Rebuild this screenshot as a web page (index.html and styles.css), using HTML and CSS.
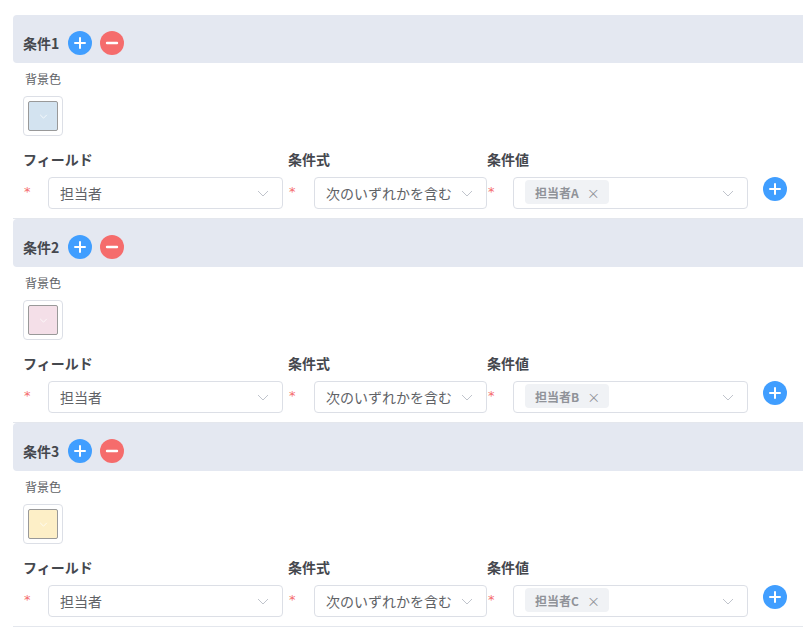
FILE: index.html
```html
<!DOCTYPE html>
<html lang="ja">
<head>
<meta charset="utf-8">
<title>条件</title>
<link rel="stylesheet" href="styles.css">
</head>
<body>
<div class="page">

  <section class="cond">
    <div class="cond-head">
      <span class="cond-title">条件1</span>
      <button class="circle add" aria-label="追加"><svg viewBox="0 0 24 24" width="24" height="24"><path d="M12 7v10M7 12h10" stroke="#fff" stroke-width="2" stroke-linecap="round"/></svg></button>
      <button class="circle del" aria-label="削除"><svg viewBox="0 0 24 24" width="24" height="24"><path d="M7 12h10" stroke="#fff" stroke-width="2.4" stroke-linecap="round"/></svg></button>
    </div>
    <div class="bg-label">背景色</div>
    <div class="picker"><div class="swatch sw-blue"><svg class="chev-w" viewBox="0 0 10 6" width="9" height="5"><path d="M1 1l4 4 4-4" fill="none" stroke="#fff" stroke-width="0.9"/></svg></div></div>
    <div class="fields">
      <div class="col col-field">
        <div class="lbl">フィールド</div>
        <div class="ctrl"><span class="req">*</span><div class="select w235"><span class="val">担当者</span><svg class="chev" viewBox="0 0 12 7" width="12" height="7"><path d="M1 1l5 5 5-5" fill="none" stroke="#c0c4cc" stroke-width="1"/></svg></div></div>
      </div>
      <div class="col col-op">
        <div class="lbl">条件式</div>
        <div class="ctrl"><span class="req">*</span><div class="select w173"><span class="val">次のいずれかを含む</span><svg class="chev" viewBox="0 0 12 7" width="12" height="7"><path d="M1 1l5 5 5-5" fill="none" stroke="#c0c4cc" stroke-width="1"/></svg></div></div>
      </div>
      <div class="col col-val">
        <div class="lbl">条件値</div>
        <div class="ctrl"><span class="req">*</span><div class="select w235"><span class="tag">担当者A<span class="x">×</span></span><svg class="chev" viewBox="0 0 12 7" width="12" height="7"><path d="M1 1l5 5 5-5" fill="none" stroke="#c0c4cc" stroke-width="1"/></svg></div></div>
      </div>
      <button class="circle add row-add" aria-label="追加"><svg viewBox="0 0 24 24" width="24" height="24"><path d="M12 7v10M7 12h10" stroke="#fff" stroke-width="2" stroke-linecap="round"/></svg></button>
    </div>
  </section>

  <section class="cond">
    <div class="cond-head">
      <span class="cond-title">条件2</span>
      <button class="circle add" aria-label="追加"><svg viewBox="0 0 24 24" width="24" height="24"><path d="M12 7v10M7 12h10" stroke="#fff" stroke-width="2" stroke-linecap="round"/></svg></button>
      <button class="circle del" aria-label="削除"><svg viewBox="0 0 24 24" width="24" height="24"><path d="M7 12h10" stroke="#fff" stroke-width="2.4" stroke-linecap="round"/></svg></button>
    </div>
    <div class="bg-label">背景色</div>
    <div class="picker"><div class="swatch sw-pink"><svg class="chev-w" viewBox="0 0 10 6" width="9" height="5"><path d="M1 1l4 4 4-4" fill="none" stroke="#fff" stroke-width="0.9"/></svg></div></div>
    <div class="fields">
      <div class="col col-field">
        <div class="lbl">フィールド</div>
        <div class="ctrl"><span class="req">*</span><div class="select w235"><span class="val">担当者</span><svg class="chev" viewBox="0 0 12 7" width="12" height="7"><path d="M1 1l5 5 5-5" fill="none" stroke="#c0c4cc" stroke-width="1"/></svg></div></div>
      </div>
      <div class="col col-op">
        <div class="lbl">条件式</div>
        <div class="ctrl"><span class="req">*</span><div class="select w173"><span class="val">次のいずれかを含む</span><svg class="chev" viewBox="0 0 12 7" width="12" height="7"><path d="M1 1l5 5 5-5" fill="none" stroke="#c0c4cc" stroke-width="1"/></svg></div></div>
      </div>
      <div class="col col-val">
        <div class="lbl">条件値</div>
        <div class="ctrl"><span class="req">*</span><div class="select w235"><span class="tag">担当者B<span class="x">×</span></span><svg class="chev" viewBox="0 0 12 7" width="12" height="7"><path d="M1 1l5 5 5-5" fill="none" stroke="#c0c4cc" stroke-width="1"/></svg></div></div>
      </div>
      <button class="circle add row-add" aria-label="追加"><svg viewBox="0 0 24 24" width="24" height="24"><path d="M12 7v10M7 12h10" stroke="#fff" stroke-width="2" stroke-linecap="round"/></svg></button>
    </div>
  </section>

  <section class="cond">
    <div class="cond-head">
      <span class="cond-title">条件3</span>
      <button class="circle add" aria-label="追加"><svg viewBox="0 0 24 24" width="24" height="24"><path d="M12 7v10M7 12h10" stroke="#fff" stroke-width="2" stroke-linecap="round"/></svg></button>
      <button class="circle del" aria-label="削除"><svg viewBox="0 0 24 24" width="24" height="24"><path d="M7 12h10" stroke="#fff" stroke-width="2.4" stroke-linecap="round"/></svg></button>
    </div>
    <div class="bg-label">背景色</div>
    <div class="picker"><div class="swatch sw-yellow"><svg class="chev-w" viewBox="0 0 10 6" width="9" height="5"><path d="M1 1l4 4 4-4" fill="none" stroke="#fff" stroke-width="0.9"/></svg></div></div>
    <div class="fields">
      <div class="col col-field">
        <div class="lbl">フィールド</div>
        <div class="ctrl"><span class="req">*</span><div class="select w235"><span class="val">担当者</span><svg class="chev" viewBox="0 0 12 7" width="12" height="7"><path d="M1 1l5 5 5-5" fill="none" stroke="#c0c4cc" stroke-width="1"/></svg></div></div>
      </div>
      <div class="col col-op">
        <div class="lbl">条件式</div>
        <div class="ctrl"><span class="req">*</span><div class="select w173"><span class="val">次のいずれかを含む</span><svg class="chev" viewBox="0 0 12 7" width="12" height="7"><path d="M1 1l5 5 5-5" fill="none" stroke="#c0c4cc" stroke-width="1"/></svg></div></div>
      </div>
      <div class="col col-val">
        <div class="lbl">条件値</div>
        <div class="ctrl"><span class="req">*</span><div class="select w235"><span class="tag">担当者C<span class="x">×</span></span><svg class="chev" viewBox="0 0 12 7" width="12" height="7"><path d="M1 1l5 5 5-5" fill="none" stroke="#c0c4cc" stroke-width="1"/></svg></div></div>
      </div>
      <button class="circle add row-add" aria-label="追加"><svg viewBox="0 0 24 24" width="24" height="24"><path d="M12 7v10M7 12h10" stroke="#fff" stroke-width="2" stroke-linecap="round"/></svg></button>
    </div>
  </section>

</div>
</body>
</html>
```

FILE: styles.css
```css
html, body {
  margin: 0;
  padding: 0;
  background: #fff;
  overflow: hidden;
}
body {
  font-family: "Noto Sans CJK JP", "Noto Sans", sans-serif;
  color: #606266;
}
.page {
  width: 830px;
  padding: 15px 0 0 13px;
}
.cond {
  border-bottom: 1px solid #e4e7ed;
  padding-bottom: 9px;
}
.cond-head {
  height: 48px;
  box-sizing: border-box;
  padding: 8px 0 0 10px;
  background: #e4e8f1;
  border-radius: 4px 0 0 4px;
  display: flex;
  align-items: center;
}
.cond-title {
  font-size: 14px;
  font-weight: 700;
  color: #45484e;
  margin-right: 9px;
}
.circle {
  width: 24px;
  height: 24px;
  border-radius: 50%;
  border: 0;
  padding: 0;
  display: flex;
  align-items: center;
  justify-content: center;
  cursor: pointer;
}
.circle svg { display: block; }
.add { background: #409eff; }
.del { background: #f56c6c; margin-left: 8px; }
.bg-label {
  font-size: 12px;
  line-height: 18px;
  padding: 7px 0 0 12px;
  color: #606266;
}
.picker {
  margin: 8px 0 0 10px;
  width: 40px;
  height: 40px;
  box-sizing: border-box;
  border: 1px solid #dcdfe6;
  border-radius: 4px;
  display: flex;
  align-items: center;
  justify-content: center;
}
.swatch {
  width: 30px;
  height: 30px;
  box-sizing: border-box;
  border: 1px solid #999;
  border-radius: 2px;
  display: flex;
  align-items: center;
  justify-content: center;
}
.sw-blue { background: #d3e3f0; }
.sw-pink { background: #f4dfe8; }
.sw-yellow { background: #fdefc7; }
.fields {
  display: flex;
  align-items: flex-end;
  margin: 13px 0 0 10px;
}
.col { display: flex; flex-direction: column; }
.col-field { width: 260px; }
.col-op { width: 199px; margin-left: 5px; }
.col-val { width: 261px; }
.lbl {
  font-size: 14px;
  font-weight: 700;
  line-height: 20px;
  color: #45484e;
  margin-bottom: 8px;
}
.ctrl { display: flex; align-items: flex-start; }
.req {
  color: #f56c6c;
  font-family: "DejaVu Sans", sans-serif;
  font-size: 13px;
  line-height: 30px;
  height: 32px;
  flex: 1;
  padding-left: 1px;
}
.select {
  height: 32px;
  box-sizing: border-box;
  border: 1px solid #dcdfe6;
  border-radius: 4px;
  display: flex;
  align-items: center;
  padding: 0 13px 0 11px;
  background: #fff;
}
.w235 { width: 235px; }
.w173 { width: 173px; }
.val {
  flex: 1;
  font-size: 14px;
  color: #606266;
  white-space: nowrap;
  overflow: hidden;
}
.chev { flex: none; margin-left: auto; }
.tag {
  height: 24px;
  box-sizing: border-box;
  padding: 0 9px 0 10px;
  margin-top: -2px;
  background: #f0f2f5;
  border-radius: 4px;
  font-size: 12px;
  font-weight: 700;
  color: #909399;
  display: flex;
  align-items: center;
}
.x {
  font-weight: 400;
  font-size: 13px;
  margin-left: 8px;
}
.row-add {
  margin-left: 15px;
  align-self: flex-end;
  margin-bottom: 8px;
}
```
